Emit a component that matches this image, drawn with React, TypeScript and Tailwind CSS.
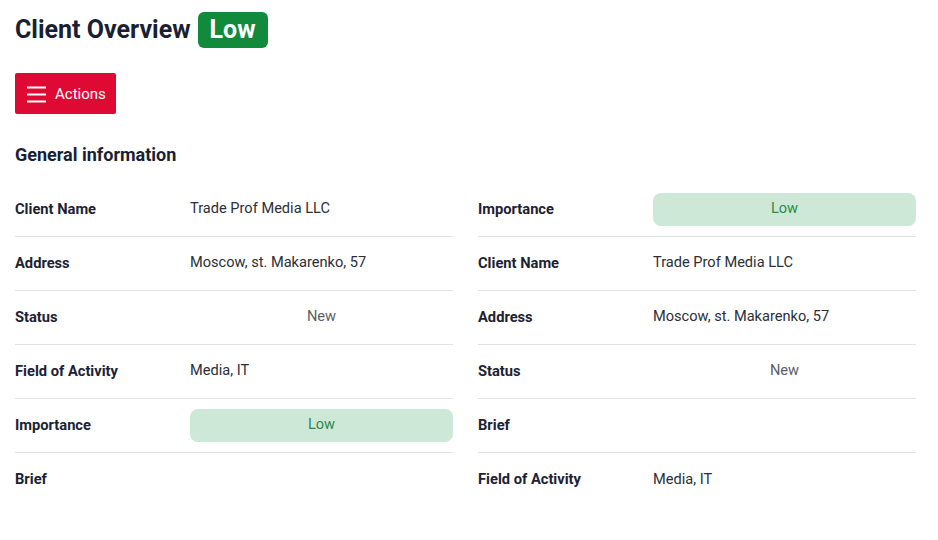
import React from "react";

type Row = { label: string; value?: string; kind?: "text" | "center" | "pill" };

const left: Row[] = [
  { label: "Client Name", value: "Trade Prof Media LLC" },
  { label: "Address", value: "Moscow, st. Makarenko, 57" },
  { label: "Status", value: "New", kind: "center" },
  { label: "Field of Activity", value: "Media, IT" },
  { label: "Importance", value: "Low", kind: "pill" },
  { label: "Brief" },
];

const right: Row[] = [
  { label: "Importance", value: "Low", kind: "pill" },
  { label: "Client Name", value: "Trade Prof Media LLC" },
  { label: "Address", value: "Moscow, st. Makarenko, 57" },
  { label: "Status", value: "New", kind: "center" },
  { label: "Brief" },
  { label: "Field of Activity", value: "Media, IT" },
];

function InfoRow({ row, last }: { row: Row; last: boolean }) {
  return (
    <div
      className={`flex items-center h-[54px] ${last ? "" : "border-b border-[#e3e3e3]"}`}
    >
      <div className="w-[175px] shrink-0 text-[14.7px] font-bold text-[#1c2233]">{row.label}</div>
      <div className="flex-1 text-[14.6px] text-[#2b2f38]">
        {row.kind === "pill" ? (
          <div className="h-[33px] rounded-lg bg-[#cde8d6] text-[#2a8a4a] flex items-center justify-center">
            {row.value}
          </div>
        ) : row.kind === "center" ? (
          <div className="text-center text-[#5a5e66]">{row.value}</div>
        ) : (
          row.value
        )}
      </div>
    </div>
  );
}

export default function App() {
  return (
    <div className="min-h-screen bg-white pl-[15px] pr-[22px] pt-[11px] font-['Roboto',sans-serif]">
      <div className="flex items-center gap-[7px]">
        <h1 className="text-[25px] font-bold text-[#1a1f33]">Client Overview</h1>
        <span className="h-[36px] px-[12px] rounded-md bg-[#128a3c] text-white text-[25px] font-bold flex items-center">
          Low
        </span>
      </div>

      <button className="mt-[24px] h-[41px] w-[101px] bg-[#df0a33] text-white text-[15px] flex items-center gap-[9px] pl-[12px] pt-[2px] rounded-[2px]">
        <svg width="19" height="17" viewBox="0 0 19 17" fill="none" stroke="white" strokeWidth="1.8">
          <path d="M0 1.5h19M0 8.5h19M0 15.5h19" />
        </svg>
        Actions
      </button>

      <h2 className="mt-[27px] text-[18px] font-bold text-[#1a1f33]">General information</h2>

      <div className="mt-[15px] grid grid-cols-2 gap-x-[25px]">
        <div>
          {left.map((r, i) => (
            <InfoRow key={i} row={r} last={i === left.length - 1} />
          ))}
        </div>
        <div>
          {right.map((r, i) => (
            <InfoRow key={i} row={r} last={i === right.length - 1} />
          ))}
        </div>
      </div>
    </div>
  );
}
